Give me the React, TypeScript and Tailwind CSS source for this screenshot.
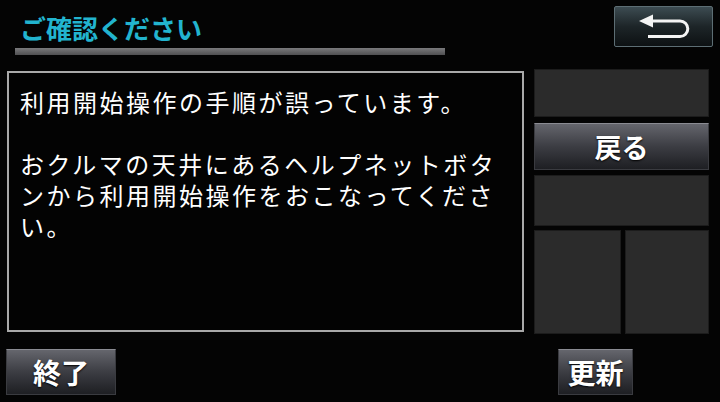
const jp = { fontFamily: '"Noto Sans CJK JP", "Noto Sans", sans-serif' };

function BackIcon() {
  return (
    <svg width="56" height="28" viewBox="636 12 56 28" fill="none">
      <path d="M639 20 L653 13.5 L653 26.5 Z" fill="#f4f4f4" />
      <path
        d="M651 20 H680 A7.8 7.8 0 0 1 680 35.6 H648"
        stroke="#f4f4f4"
        strokeWidth={3}
        strokeLinecap="butt"
      />
    </svg>
  );
}

function GrayButton({ label, className }: { label: string; className: string }) {
  return (
    <button
      className={
        "flex items-center justify-center border border-[#3a3b40] border-t-[#8a8b92] bg-gradient-to-b from-[#65666d] via-[#3c3d43] to-[#1e1f23] font-bold leading-none text-white " +
        className
      }
      style={{ ...jp, textShadow: "0 1px 2px #000" }}
    >
      {label}
    </button>
  );
}

export default function App() {
  const message =
    "利用開始操作の手順が誤っています。\n\nおクルマの天井にあるヘルプネットボタ\nンから利用開始操作をおこなってくださ\nい。";

  return (
    <div className="flex h-[402px] w-[720px] flex-col overflow-hidden bg-[#040404]" style={jp}>
      {/* Header */}
      <div className="flex h-[69px]">
        <div className="pl-[15px] pt-[13px]">
          <div className="px-[5px] text-[26px] font-bold leading-[30px] text-[#22b4cf]">
            ご確認ください
          </div>
          <div className="mt-[5px] h-[7px] w-[430px] bg-gradient-to-b from-[#7a7a7c] to-[#505052]" />
        </div>
        <button className="ml-auto mr-[7px] mt-[6px] flex h-[41px] w-[99px] items-center justify-center rounded-[2px] border border-[#5d6e74] bg-gradient-to-b from-[#3d4c52] via-[#1d2528] to-[#0d1113]">
          <BackIcon />
        </button>
      </div>

      {/* Middle */}
      <div className="flex">
        <div className="ml-[7px] mt-[2px] h-[261px] w-[517px] border-2 border-[#a9a9a9] bg-[#030303] pl-[11px] pt-[13px]">
          <p className="whitespace-pre text-[24px] leading-[31px] tracking-[2.5px] text-white">
            {message}
          </p>
        </div>
        <div className="ml-[10px] flex w-[175px] flex-col">
          <div className="h-[48px] border border-[#1c1c1c] bg-[#2b2b2b]" />
          <GrayButton label="戻る" className="mt-[6px] h-[47px] w-full text-[27px]" />
          <div className="mt-[5px] h-[51px] border border-[#1c1c1c] bg-[#2b2b2b]" />
          <div className="mt-[4px] flex h-[104px] gap-[4px]">
            <div className="w-[87px] border border-[#1c1c1c] bg-[#2b2b2b]" />
            <div className="flex-1 border border-[#1c1c1c] bg-[#2b2b2b]" />
          </div>
        </div>
      </div>

      {/* Bottom */}
      <div className="mt-[15px] flex">
        <GrayButton label="終了" className="ml-[6px] h-[46px] w-[110px] text-[28px]" />
        <GrayButton label="更新" className="ml-[442px] h-[46px] w-[75px] text-[28px]" />
      </div>
    </div>
  );
}
